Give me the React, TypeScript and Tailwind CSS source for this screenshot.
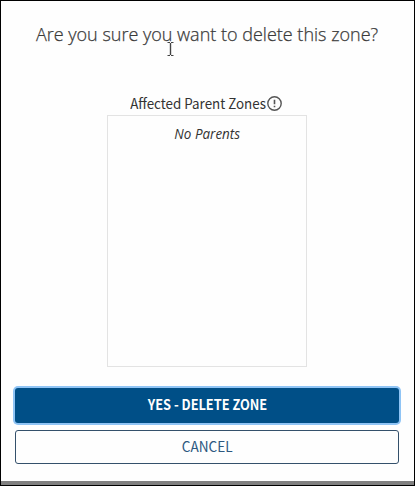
import React from "react";

function AlertIcon() {
  return (
    <svg className="ml-px size-[15px] shrink-0" viewBox="0 0 15 15" fill="none" stroke="#555555">
      <circle cx="7.5" cy="7.5" r="6.7" strokeWidth="1.4" />
      <path d="M7.5 3.7v4.6M7.5 9.8v1.5" strokeWidth="1.6" />
    </svg>
  );
}

function TextCursor() {
  return (
    <svg className="absolute left-[166px] top-[41px] h-[14px] w-[7px]" viewBox="0 0 7 14" fill="none" stroke="#444444">
      <path d="M0.5 0.5H3M4 0.5H6.5M0.5 13.5H3M4 13.5H6.5" />
      <path d="M3.5 1V13" strokeWidth="1.4" />
    </svg>
  );
}

export default function App() {
  return (
    <div className="relative flex h-[486px] w-[415px] flex-col border border-black bg-[#fefefe] font-['Noto_Sans_CJK_SC','Open_Sans',sans-serif] text-[#333333]">
      <h1 className="mr-px mt-[20px] whitespace-nowrap text-center font-['Open_Sans',sans-serif] text-[18px] font-light leading-[26px] text-[#3a3a3a] [-webkit-text-stroke:0.25px_#3a3a3a]">
        Are you sure you want to delete this zone?
      </h1>
      <section className="mr-px mt-[46px] flex flex-col items-center">
        <div className="mr-px flex h-[21px] items-center whitespace-nowrap text-[14px] leading-[21px]">
          <span className="-mx-[3.5px] scale-x-[.955]">Affected Parent Zones</span>
          <AlertIcon />
        </div>
        <div className="mt-px h-[252px] w-[200px] border border-[#e3e3e3] pt-[7px] text-center font-['Open_Sans',sans-serif] text-[14px] italic leading-[21px]">
          <span className="inline-block scale-x-[.96]">No Parents</span>
        </div>
      </section>
      <div className="mt-[21px] flex flex-col gap-[7px] pl-[14px] pr-[15px]">
        <button className="h-[35px] rounded-[3px] bg-[#004f87] text-[14px] font-bold leading-[33px] text-white shadow-[0_0_0_2px_#8fc4f5]">
          <span className="inline-block -translate-y-px scale-x-[.912]">YES - DELETE ZONE</span>
        </button>
        <button className="h-[34px] rounded-[3px] border border-[#34506b] text-[14px] leading-[31px] text-[#2d587f]">
          <span className="inline-block -translate-y-px scale-x-[.97]">CANCEL</span>
        </button>
      </div>
      <div className="mt-auto h-[4px] bg-[#808080]" />
      <TextCursor />
    </div>
  );
}
